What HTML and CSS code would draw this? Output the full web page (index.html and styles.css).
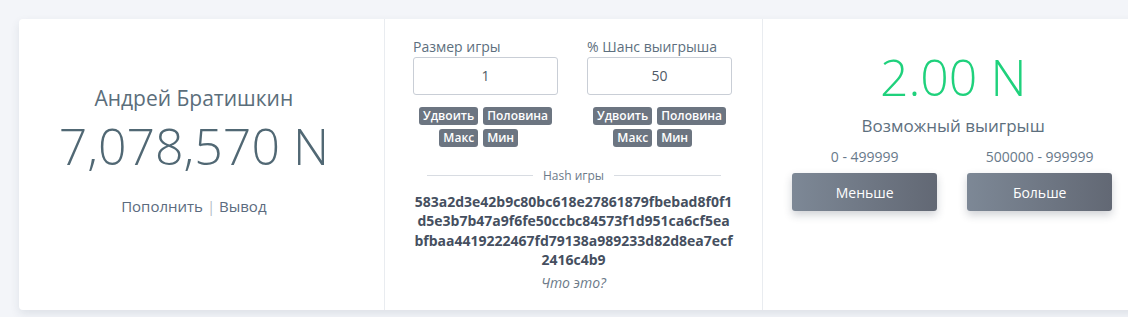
FILE: index.html
```html
<!DOCTYPE html>
<html lang="ru">

<head>
    <meta charset="UTF-8">
    <meta name="viewport" content="width=device-width, initial-scale=1.0">
    <title>Dice</title>
    <link rel="stylesheet" href="styles.css">
</head>

<body>
    <div class="game-card">
        <div class="col col-user">
            <div class="user-name">Андрей Братишкин</div>
            <div class="user-balance">7,078,570 N</div>
            <div class="user-links">
                <a href="#">Пополнить</a>
                <span class="sep">|</span>
                <a href="#">Вывод</a>
            </div>
        </div>

        <div class="col col-params">
            <div class="params">
                <div class="param">
                    <label class="param-label">Размер игры</label>
                    <input class="param-input" type="text" value="1">
                    <div class="badges">
                        <span class="badge left">Удвоить</span>
                        <span class="badge">Половина</span>
                        <span class="badge left">Макс</span>
                        <span class="badge">Мин</span>
                    </div>
                </div>
                <div class="param">
                    <label class="param-label">% Шанс выигрыша</label>
                    <input class="param-input" type="text" value="50">
                    <div class="badges">
                        <span class="badge left">Удвоить</span>
                        <span class="badge">Половина</span>
                        <span class="badge left">Макс</span>
                        <span class="badge">Мин</span>
                    </div>
                </div>
            </div>

            <div class="hash-title"><span>Hash игры</span></div>
            <div class="hash">583a2d3e42b9c80bc618e27861879fbebad8f0f1<br>d5e3b7b47a9f6fe50ccbc84573f1d951ca6cf5ea<br>bfbaa4419222467fd79138a989233d82d8ea7ecf<br>2416c4b9</div>
            <a href="#" class="hash-help">Что это?</a>
        </div>

        <div class="col col-bet">
            <div class="win-amount">2.00 N</div>
            <div class="win-label">Возможный выигрыш</div>
            <div class="bet-buttons">
                <div class="bet">
                    <div class="bet-range">0 - 499999</div>
                    <button class="bet-btn">Меньше</button>
                </div>
                <div class="bet">
                    <div class="bet-range">500000 - 999999</div>
                    <button class="bet-btn">Больше</button>
                </div>
            </div>
        </div>
    </div>
</body>

</html>
```

FILE: styles.css
```css
body {
    margin: 0;
    height: 317px;
    overflow: hidden;
    background-color: #f3f5f9;
    font-family: "Open Sans", "Liberation Sans", sans-serif;
    line-height: 1.2;
}

.game-card {
    display: flex;
    width: 1124px;
    height: 291px;
    margin: 19px 0 0 19px;
    background-color: #fff;
    border-radius: 4px;
    box-shadow: 0 4px 10px rgba(40, 55, 80, 0.10);
}

.col {
    box-sizing: border-box;
    display: flex;
    flex-direction: column;
    align-items: center;
    text-align: center;
}

.col-user {
    width: 366px;
    padding: 67px 15px 0 0;
    border-right: 1px solid #e9ecf0;
}

.col-params {
    width: 379px;
    padding-top: 20px;
    border-right: 1px solid #e9ecf0;
}

.col-bet {
    width: 380px;
    padding-top: 28px;
}

/* user */

.user-name {
    font-size: 21px;
    color: #5b6e7b;
}

.user-balance {
    margin-top: 5px;
    font-size: 50px;
    font-weight: 300;
    color: #516874;
}

.user-links {
    margin-top: 21px;
    font-size: 15px;
    color: #5b6b7e;
}

.user-links a {
    color: #5b6b7e;
    text-decoration: none;
}

.user-links .sep {
    color: #b4bcc6;
}

/* params */

.params {
    display: flex;
    gap: 29px;
    margin-right: 2px;
}

.param {
    display: flex;
    flex-direction: column;
    width: 145px;
}

.param-label {
    font-size: 14px;
    color: #5d6f7e;
    text-align: left;
}

.param-input {
    box-sizing: border-box;
    width: 100%;
    height: 38px;
    margin-top: 1px;
    border: 1px solid #c9ced6;
    border-radius: 3px;
    font-family: inherit;
    font-size: 14px;
    color: #4f5a66;
    text-align: center;
    outline: none;
}

.badges {
    display: grid;
    grid-template-columns: auto auto;
    justify-content: center;
    gap: 4px 5px;
    margin-top: 12px;
}

.badge {
    justify-self: start;
    padding: 2px 4px;
    border-radius: 3px;
    background-color: #6c7581;
    color: #fff;
    font-size: 12px;
    font-weight: 600;
    line-height: 14px;
}

.badge.left {
    justify-self: end;
}

.hash-title {
    display: flex;
    align-items: center;
    gap: 10px;
    width: 294px;
    margin-top: 22px;
    font-size: 12px;
    color: #6c7a89;
}

.hash-title::before,
.hash-title::after {
    content: "";
    flex: 1;
    border-top: 1px solid #d8dce2;
}

.hash {
    margin-top: 9px;
    font-size: 14px;
    font-weight: 700;
    line-height: 19.3px;
    color: #454f60;
}

.hash-help {
    margin-top: 6px;
    font-size: 14px;
    font-style: italic;
    color: #6c7a89;
    text-decoration: none;
}

/* bet */

.win-amount {
    font-size: 50px;
    font-weight: 300;
    color: #1fd17c;
}

.win-label {
    margin-top: 9px;
    font-size: 17px;
    color: #5d6f7e;
}

.bet-buttons {
    display: flex;
    gap: 30px;
    margin-top: 13px;
    margin-right: 2px;
}

.bet {
    display: flex;
    flex-direction: column;
    align-items: center;
    width: 145px;
}

.bet-range {
    font-size: 14px;
    color: #68798a;
}

.bet-btn {
    width: 100%;
    height: 38px;
    margin-top: 7px;
    border: none;
    border-radius: 3px;
    background: linear-gradient(to right, #7d8896, #626874);
    box-shadow: 0 4px 8px rgba(40, 50, 70, 0.22);
    color: #fff;
    font-family: inherit;
    font-size: 14px;
    font-weight: 500;
    cursor: pointer;
}
```
